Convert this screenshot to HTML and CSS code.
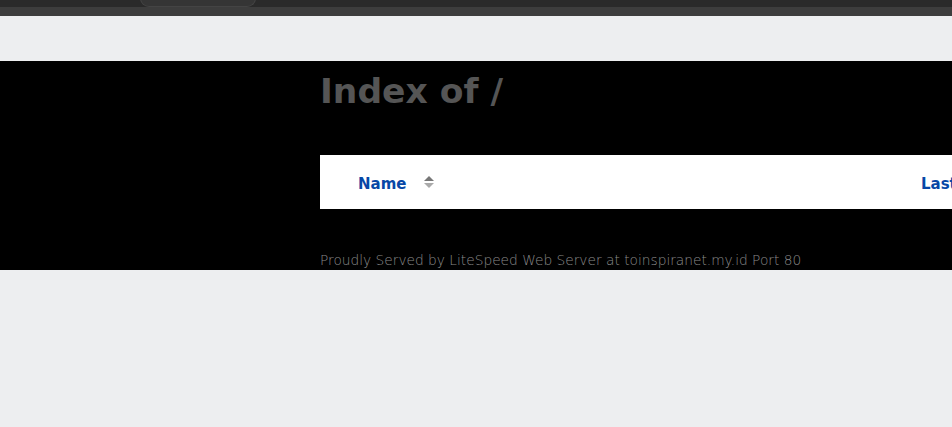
FILE: index.html
```html
<!DOCTYPE html>
<html lang="en">
<head>
<meta charset="utf-8">
<title>Index of /</title>
<link rel="stylesheet" href="styles.css">
</head>
<body>
<div class="chrome">
  <div class="chrome-top"><div class="tab"></div></div>
  <div class="chrome-bottom"></div>
</div>
<div class="spacer"></div>
<main class="page">
  <h1 class="title">Index of /</h1>
  <div class="table-head">
    <div class="col-name">Name <span class="sort"><span class="up"></span><span class="down"></span></span></div>
    <div class="col-last">Last modified</div>
  </div>
  <p class="footer">Proudly Served by LiteSpeed Web Server at toinspiranet.my.id Port 80</p>
</main>
</body>
</html>
```
FILE: styles.css
```css
html, body {
  margin: 0;
  padding: 0;
  background: #edeef0;
  overflow: hidden;
  height: 427px;
}
.chrome { height: 16px; display: flex; flex-direction: column; }
.chrome-top {
  height: 7px;
  background: #2a2a2a;
  position: relative;
}
.tab {
  position: absolute;
  left: 140px;
  width: 114px;
  top: -10px;
  height: 16px;
  background: #353535;
  border: 1px solid #444;
  border-top: none;
  border-radius: 0 0 9px 9px;
}
.chrome-bottom { flex: 1; background: #3d3d3d; }
.spacer { height: 45px; }
.page {
  background: #000;
  height: 209px;
  padding-left: 320px;
  box-sizing: border-box;
  width: 1400px;
  padding-top: 8px;
}
.title {
  margin: 0;
  font-family: "DejaVu Sans", sans-serif;
  font-weight: 700;
  font-size: 34.5px;
  line-height: 44px;
  color: #555;
}
.table-head {
  margin-top: 42px;
  height: 54px;
  padding-top: 3px;
  box-sizing: border-box;
  background: #fff;
  display: flex;
  align-items: center;
  font-family: "DejaVu Sans", sans-serif;
  font-weight: 700;
  font-size: 15px;
  color: #0747a6;
  width: 900px;
}
.col-name {
  padding-left: 38px;
  width: 563px;
  display: flex;
  align-items: center;
}
.sort {
  display: inline-flex;
  flex-direction: column;
  gap: 2px;
  margin-left: 18px;
  margin-top: -4px;
}
.up {
  width: 0; height: 0;
  border-left: 5px solid transparent;
  border-right: 5px solid transparent;
  border-bottom: 5px solid #777;
}
.down {
  width: 0; height: 0;
  border-left: 5px solid transparent;
  border-right: 5px solid transparent;
  border-top: 5px solid #aaa;
}
.footer {
  margin: 43px 0 0;
  font-family: "DejaVu Sans", sans-serif;
  font-weight: 200;
  font-size: 13.75px;
  color: #8a8a8a;
}
```
